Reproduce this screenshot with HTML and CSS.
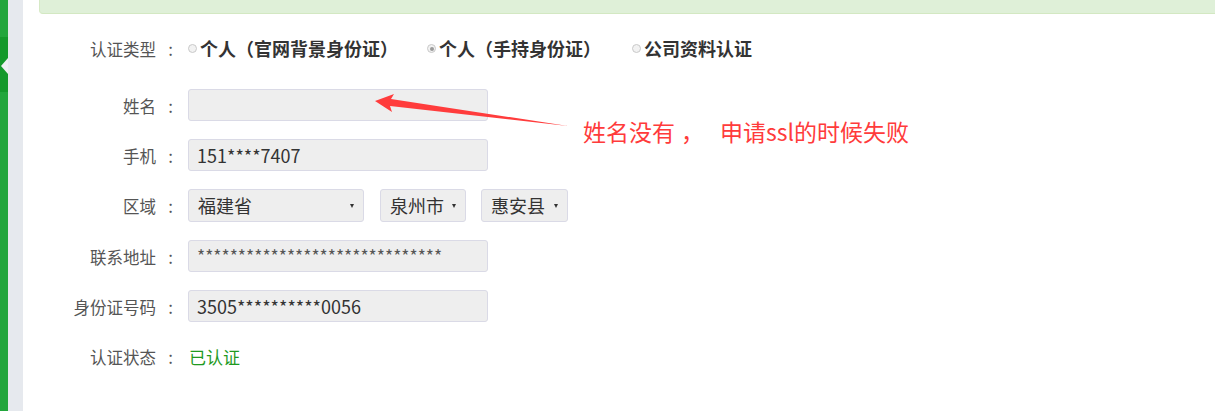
FILE: index.html
```html
<!DOCTYPE html>
<html lang="zh-CN">
<head>
<meta charset="utf-8">
<title>认证信息</title>
<link rel="stylesheet" href="styles.css">
</head>
<body>
<div class="page">
  <div class="sidebar">
    <div class="tab"><span class="tri"></span></div>
  </div>
  <div class="gutter"></div>
  <div class="main">
    <div class="alert"></div>
    <div class="form">
      <div class="row type">
        <div class="label">认证类型<span class="colon">:</span></div>
        <div class="radios">
          <span class="opt"><span class="radio"></span>个人（官网背景身份证）</span>
          <span class="opt"><span class="radio on"></span>个人（手持身份证）</span>
          <span class="opt"><span class="radio"></span>公司资料认证</span>
        </div>
      </div>
      <div class="row">
        <div class="label">姓名<span class="colon">:</span></div>
        <div class="input"></div>
      </div>
      <div class="row">
        <div class="label">手机<span class="colon">:</span></div>
        <div class="input">151****7407</div>
      </div>
      <div class="row region">
        <div class="label">区域<span class="colon">:</span></div>
        <div class="select s1">福建省<span class="caret"></span></div>
        <div class="select s2">泉州市<span class="caret"></span></div>
        <div class="select s3">惠安县<span class="caret"></span></div>
      </div>
      <div class="row">
        <div class="label">联系地址<span class="colon">:</span></div>
        <div class="input stars">******************************</div>
      </div>
      <div class="row">
        <div class="label">身份证号码<span class="colon">:</span></div>
        <div class="input">3505**********0056</div>
      </div>
      <div class="row">
        <div class="label">认证状态<span class="colon">:</span></div>
        <div class="status">已认证</div>
      </div>
    </div>
  </div>
</div>
<div class="note"><span>姓名没有</span><span class="comma">，</span><span>申请ssl的时候失败</span></div>
<svg class="arrow" width="1215" height="411" viewBox="0 0 1215 411">
  <polygon points="375,101 394,94 391,99 568,126 390,106 392,112" fill="#ff3c3c"/>
</svg>
</body>
</html>
```
FILE: styles.css
```css
html, body {
  margin: 0;
  padding: 0;
  background: #fff;
}
body {
  font-family: "Noto Sans CJK SC", "Noto Sans", sans-serif;
  color: #555;
  width: 1215px;
  height: 411px;
  overflow: hidden;
  position: relative;
}
.page {
  display: flex;
  height: 411px;
}
.sidebar {
  width: 8px;
  background: #22a63c;
  padding-top: 37px;
  box-sizing: border-box;
}
.tab {
  height: 55px;
  background: #14992b;
  display: flex;
  align-items: center;
  justify-content: flex-end;
}
.tri {
  width: 0;
  height: 0;
  border-top: 8px solid transparent;
  border-bottom: 8px solid transparent;
  border-right: 7px solid #eef0f2;
  margin-top: 3px;
}
.gutter {
  width: 15px;
  background: #e6e9ee;
}
.main {
  flex: 1;
  padding-left: 16px;
}
.alert {
  height: 13px;
  background: #dff0d8;
  border-left: 1px solid #d6e9c6;
  border-bottom: 1px solid #d3e8c2;
  border-bottom-left-radius: 4px;
}
.form {
  margin-left: -16px;
  padding-top: 18px;
}
.row {
  display: flex;
  align-items: center;
  height: 32px;
  margin-bottom: 18px;
}
.row.type {
  margin-bottom: 25px;
}
.row.region {
  height: 33px;
}
.label {
  width: 155px;
  text-align: right;
  font-size: 16.5px;
  color: #555;
  margin-right: 10px;
  white-space: nowrap;
}
.colon {
  display: inline-block;
  width: 22px;
  padding-right: 5px;
  box-sizing: border-box;
  text-align: right;
  font-size: 17px;
}
.radios {
  display: flex;
  align-items: center;
  font-size: 18px;
  font-weight: bold;
  color: #333;
}
.opt {
  display: flex;
  align-items: center;
  margin-right: 29px;
}
.opt:nth-child(2) {
  margin-right: 31px;
}
.radio {
  width: 7px;
  height: 7px;
  border: 1px solid #c9c9c9;
  border-radius: 50%;
  background: #f2f2f2;
  margin: 1px 3px 0 0;
  position: relative;
}
.radio.on::after {
  content: "";
  position: absolute;
  left: 1.5px;
  top: 1.5px;
  width: 4px;
  height: 4px;
  border-radius: 50%;
  background: #9a9a9a;
}
.input, .select {
  box-sizing: border-box;
  height: 32px;
  background: #eeeeee;
  border: 1px solid #dadae6;
  border-radius: 3px;
  font-size: 18px;
  color: #333;
  padding-left: 8px;
  line-height: 30px;
  white-space: nowrap;
}
.input {
  width: 300px;
}
.input.stars {
  color: #555;
  font-size: 17.5px;
}
.select {
  height: 33px;
  position: relative;
  padding-left: 9px;
}
.s1 { width: 176px; margin-right: 16px; }
.s2 { width: 86px; margin-right: 15px; }
.s3 { width: 87px; }
.caret {
  position: absolute;
  right: 9px;
  top: 14px;
  width: 0;
  height: 0;
  border-left: 2.5px solid transparent;
  border-right: 2.5px solid transparent;
  border-top: 4px solid #333;
}
.status {
  font-size: 17px;
  color: #1f9a1f;
  padding-left: 1px;
}
.note {
  position: absolute;
  left: 583px;
  top: 116px;
  font-size: 23px;
  color: #ff3b3b;
  white-space: nowrap;
  line-height: 30px;
  display: flex;
}
.comma {
  display: inline-block;
  width: 39px;
  margin-left: 6px;
}
.arrow {
  position: absolute;
  left: 0;
  top: 0;
  pointer-events: none;
}
```
